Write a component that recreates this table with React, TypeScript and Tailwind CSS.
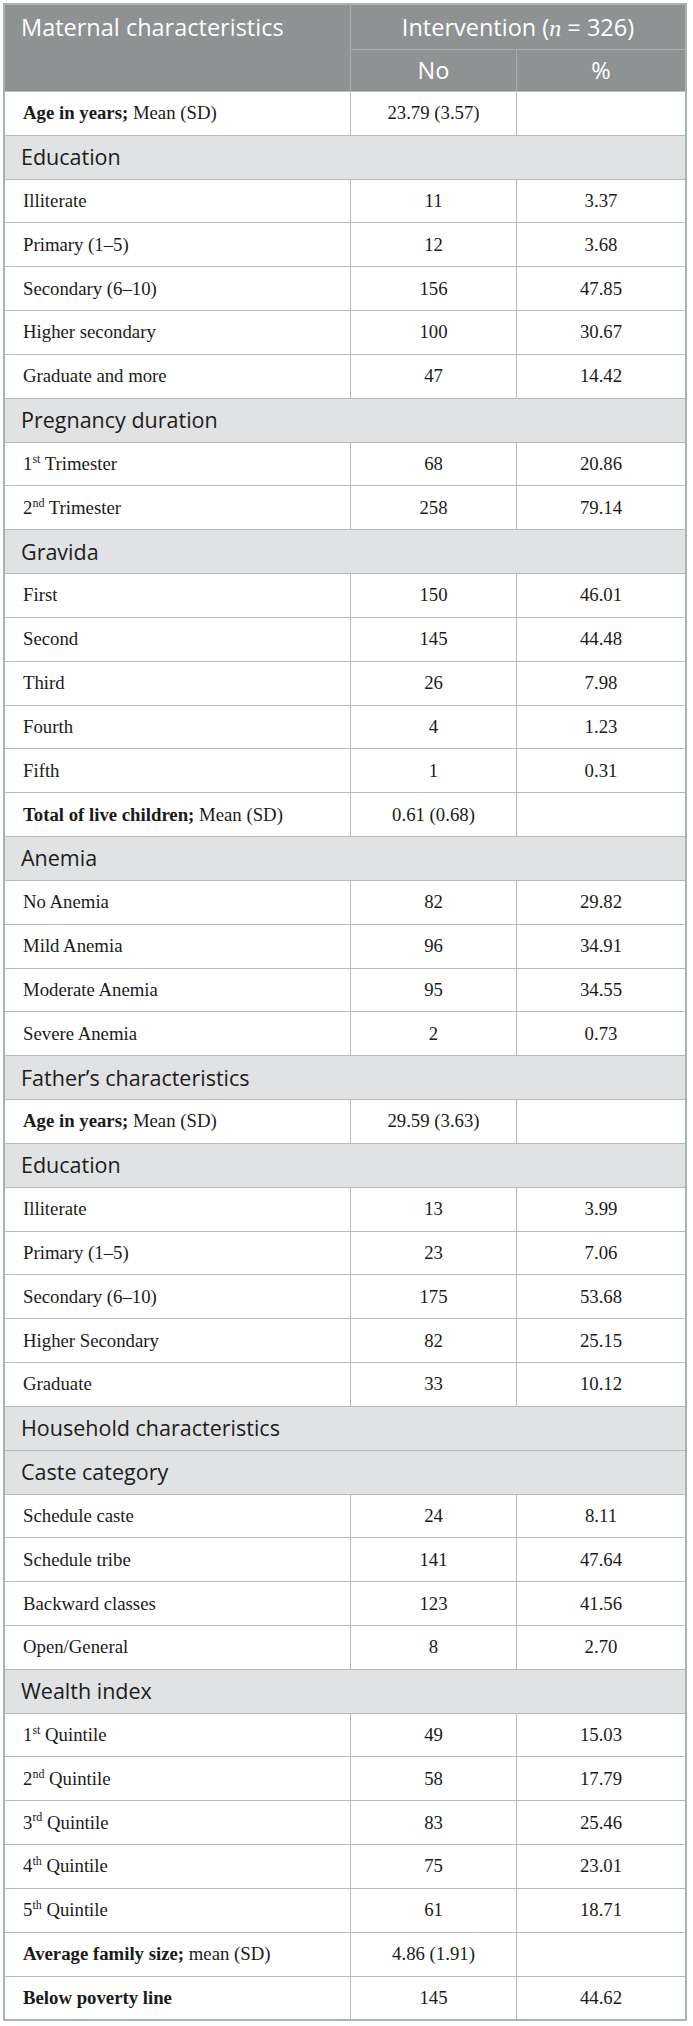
import React from 'react';

type Row =
  | { kind: 'section'; label: React.ReactNode }
  | { kind: 'data'; label: React.ReactNode; no: string; pct: string };

const sec = (label: string): Row => ({ kind: 'section', label });
const row = (label: React.ReactNode, no: string, pct = ''): Row => ({ kind: 'data', label, no, pct });

const ord = (n: string, suf: string, rest: string) => (
  <>
    {n}
    <sup className="text-[12px] top-[-0.6em]">{suf}</sup> {rest}
  </>
);

const rows: Row[] = [
  row(<><b>Age in years;</b> Mean (SD)</>, '23.79 (3.57)'),
  sec('Education'),
  row('Illiterate', '11', '3.37'),
  row('Primary (1–5)', '12', '3.68'),
  row('Secondary (6–10)', '156', '47.85'),
  row('Higher secondary', '100', '30.67'),
  row('Graduate and more', '47', '14.42'),
  sec('Pregnancy duration'),
  row(ord('1', 'st', 'Trimester'), '68', '20.86'),
  row(ord('2', 'nd', 'Trimester'), '258', '79.14'),
  sec('Gravida'),
  row('First', '150', '46.01'),
  row('Second', '145', '44.48'),
  row('Third', '26', '7.98'),
  row('Fourth', '4', '1.23'),
  row('Fifth', '1', '0.31'),
  row(<><b>Total of live children;</b> Mean (SD)</>, '0.61 (0.68)'),
  sec('Anemia'),
  row('No Anemia', '82', '29.82'),
  row('Mild Anemia', '96', '34.91'),
  row('Moderate Anemia', '95', '34.55'),
  row('Severe Anemia', '2', '0.73'),
  sec('Father’s characteristics'),
  row(<><b>Age in years;</b> Mean (SD)</>, '29.59 (3.63)'),
  sec('Education'),
  row('Illiterate', '13', '3.99'),
  row('Primary (1–5)', '23', '7.06'),
  row('Secondary (6–10)', '175', '53.68'),
  row('Higher Secondary', '82', '25.15'),
  row('Graduate', '33', '10.12'),
  sec('Household characteristics'),
  sec('Caste category'),
  row('Schedule caste', '24', '8.11'),
  row('Schedule tribe', '141', '47.64'),
  row('Backward classes', '123', '41.56'),
  row('Open/General', '8', '2.70'),
  sec('Wealth index'),
  row(ord('1', 'st', 'Quintile'), '49', '15.03'),
  row(ord('2', 'nd', 'Quintile'), '58', '17.79'),
  row(ord('3', 'rd', 'Quintile'), '83', '25.46'),
  row(ord('4', 'th', 'Quintile'), '75', '23.01'),
  row(ord('5', 'th', 'Quintile'), '61', '18.71'),
  row(<><b>Average family size;</b> mean (SD)</>, '4.86 (1.91)'),
  row(<b>Below poverty line</b>, '145', '44.62'),
];

const sans = "font-['Open_Sans',sans-serif]";
const serif = "font-['Liberation_Serif',serif]";

export default function App() {
  return (
    <div className="bg-white w-[693px] h-[2026px] pt-[3px] pl-[3px]">
      <div className="w-[684px] border-2 border-[#a7b5b0]">
        {/* header */}
        <div className={`grid grid-cols-[346px_166px_1fr] grid-rows-[45px_41px] bg-[#8e9293] text-white ${sans}`}>
          <div className="row-span-2 border-r border-[#a9adae] pl-[16px] pt-[5px] text-[23.5px] leading-[34px]">
            Maternal characteristics
          </div>
          <div className="col-span-2 flex items-center justify-center border-b border-[#a9adae] text-[23.5px] pt-[1px]">
            <span>
              Intervention (<i className="font-['Liberation_Serif',serif] text-[24px]">n</i> = 326)
            </span>
          </div>
          <div className="flex items-center justify-center border-r border-[#a9adae] text-[23.5px]">No</div>
          <div className="flex items-center justify-center text-[23.5px]">%</div>
        </div>

        {/* body */}
        {rows.map((r, i) => {
          if (r.kind === 'section') {
            return (
              <div
                key={i}
                className={`h-[43.84px] flex items-center bg-[#e1e2e3] border-t border-[#b8bbbc] pl-[16px] text-[21.5px] text-[#1c1c1c] ${sans}`}
              >
                {r.label}
              </div>
            );
          }
          return (
            <div
              key={i}
              className={`h-[43.84px] grid grid-cols-[346px_166px_1fr] border-t border-[#b8bbbc] text-[18.75px] text-[#1a1a1a] ${serif}`}
            >
              <div className="flex items-center pl-[18px] border-r border-[#b8bbbc]">
                <span>{r.label}</span>
              </div>
              <div className="flex items-center justify-center border-r border-[#b8bbbc]">{r.no}</div>
              <div className="flex items-center justify-center">{r.pct}</div>
            </div>
          );
        })}
      </div>
    </div>
  );
}
